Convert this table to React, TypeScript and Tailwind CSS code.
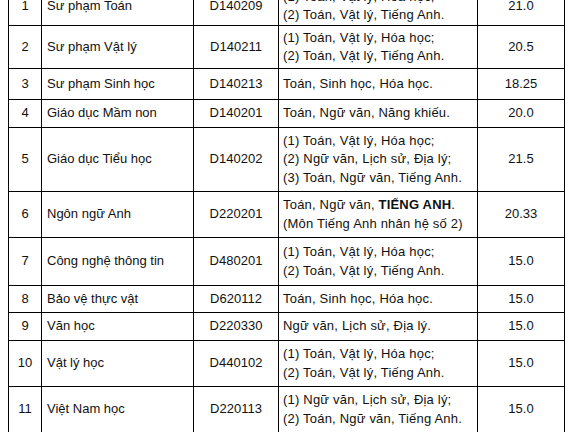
import React from "react";

type Row = { n: string; name: string; code: string; subj: React.ReactNode[]; score: string; h: number };

const rows: Row[] = [
  { n: "1", name: "Sư phạm Toán", code: "D140209", subj: ["(1) Toán, Vật lý, Hóa học;", "(2) Toán, Vật lý, Tiếng Anh."], score: "21.0", h: 39 },
  { n: "2", name: "Sư phạm Vật lý", code: "D140211", subj: ["(1) Toán, Vật lý, Hóa học;", "(2) Toán, Vật lý, Tiếng Anh."], score: "20.5", h: 43 },
  { n: "3", name: "Sư phạm Sinh học", code: "D140213", subj: ["Toán, Sinh học, Hóa học."], score: "18.25", h: 31 },
  { n: "4", name: "Giáo dục Mầm non", code: "D140201", subj: ["Toán, Ngữ văn, Năng khiếu."], score: "20.0", h: 28 },
  { n: "5", name: "Giáo dục Tiểu học", code: "D140202", subj: ["(1) Toán, Vật lý, Hóa học;", "(2) Ngữ văn, Lịch sử, Địa lý;", "(3) Toán, Ngữ văn, Tiếng Anh."], score: "21.5", h: 64 },
  {
    n: "6",
    name: "Ngôn ngữ Anh",
    code: "D220201",
    subj: [
      <span key="a">
        Toán, Ngữ văn, <b className="font-bold">TIẾNG ANH</b>.
      </span>,
      "(Môn Tiếng Anh nhân hệ số 2)",
    ],
    score: "20.33",
    h: 46,
  },
  { n: "7", name: "Công nghệ thông tin", code: "D480201", subj: ["(1) Toán, Vật lý, Hóa học;", "(2) Toán, Vật lý, Tiếng Anh."], score: "15.0", h: 48 },
  { n: "8", name: "Bảo vệ thực vật", code: "D620112", subj: ["Toán, Sinh học, Hóa học."], score: "15.0", h: 27 },
  { n: "9", name: "Văn học", code: "D220330", subj: ["Ngữ văn, Lịch sử, Địa lý."], score: "15.0", h: 28 },
  { n: "10", name: "Vật lý học", code: "D440102", subj: ["(1) Toán, Vật lý, Hóa học;", "(2) Toán, Vật lý, Tiếng Anh."], score: "15.0", h: 46 },
  { n: "11", name: "Việt Nam học", code: "D220113", subj: ["(1) Ngữ văn, Lịch sử, Địa lý;", "(2) Toán, Ngữ văn, Tiếng Anh."], score: "15.0", h: 46 },
];

export default function App() {
  return (
    <div className="w-[584px] h-[432px] overflow-hidden bg-white" style={{ fontFamily: '"Liberation Sans", Arial, sans-serif' }}>
      <table className="ml-[8px] -mt-[14px] border-collapse table-fixed text-[13px] leading-[18.5px] text-[#111]">
        <colgroup>
          <col className="w-[33px]" />
          <col className="w-[152px]" />
          <col className="w-[85px]" />
          <col className="w-[199px]" />
          <col className="w-[87px]" />
        </colgroup>
        <tbody>
          {rows.map((r) => (
            <tr key={r.n} style={{ height: r.h }}>
              <td className="border border-black text-center align-middle p-0">{r.n}</td>
              <td className="border border-black align-middle px-[5px] py-0">{r.name}</td>
              <td className="border border-black text-center align-middle p-0">{r.code}</td>
              <td className="border border-black align-middle pl-[4px] pr-0 py-0 tracking-[0.2px] whitespace-nowrap">
                {r.subj.map((s, i) => (
                  <div key={i}>{s}</div>
                ))}
              </td>
              <td className="border border-black text-center align-middle p-0">{r.score}</td>
            </tr>
          ))}
        </tbody>
      </table>
    </div>
  );
}
